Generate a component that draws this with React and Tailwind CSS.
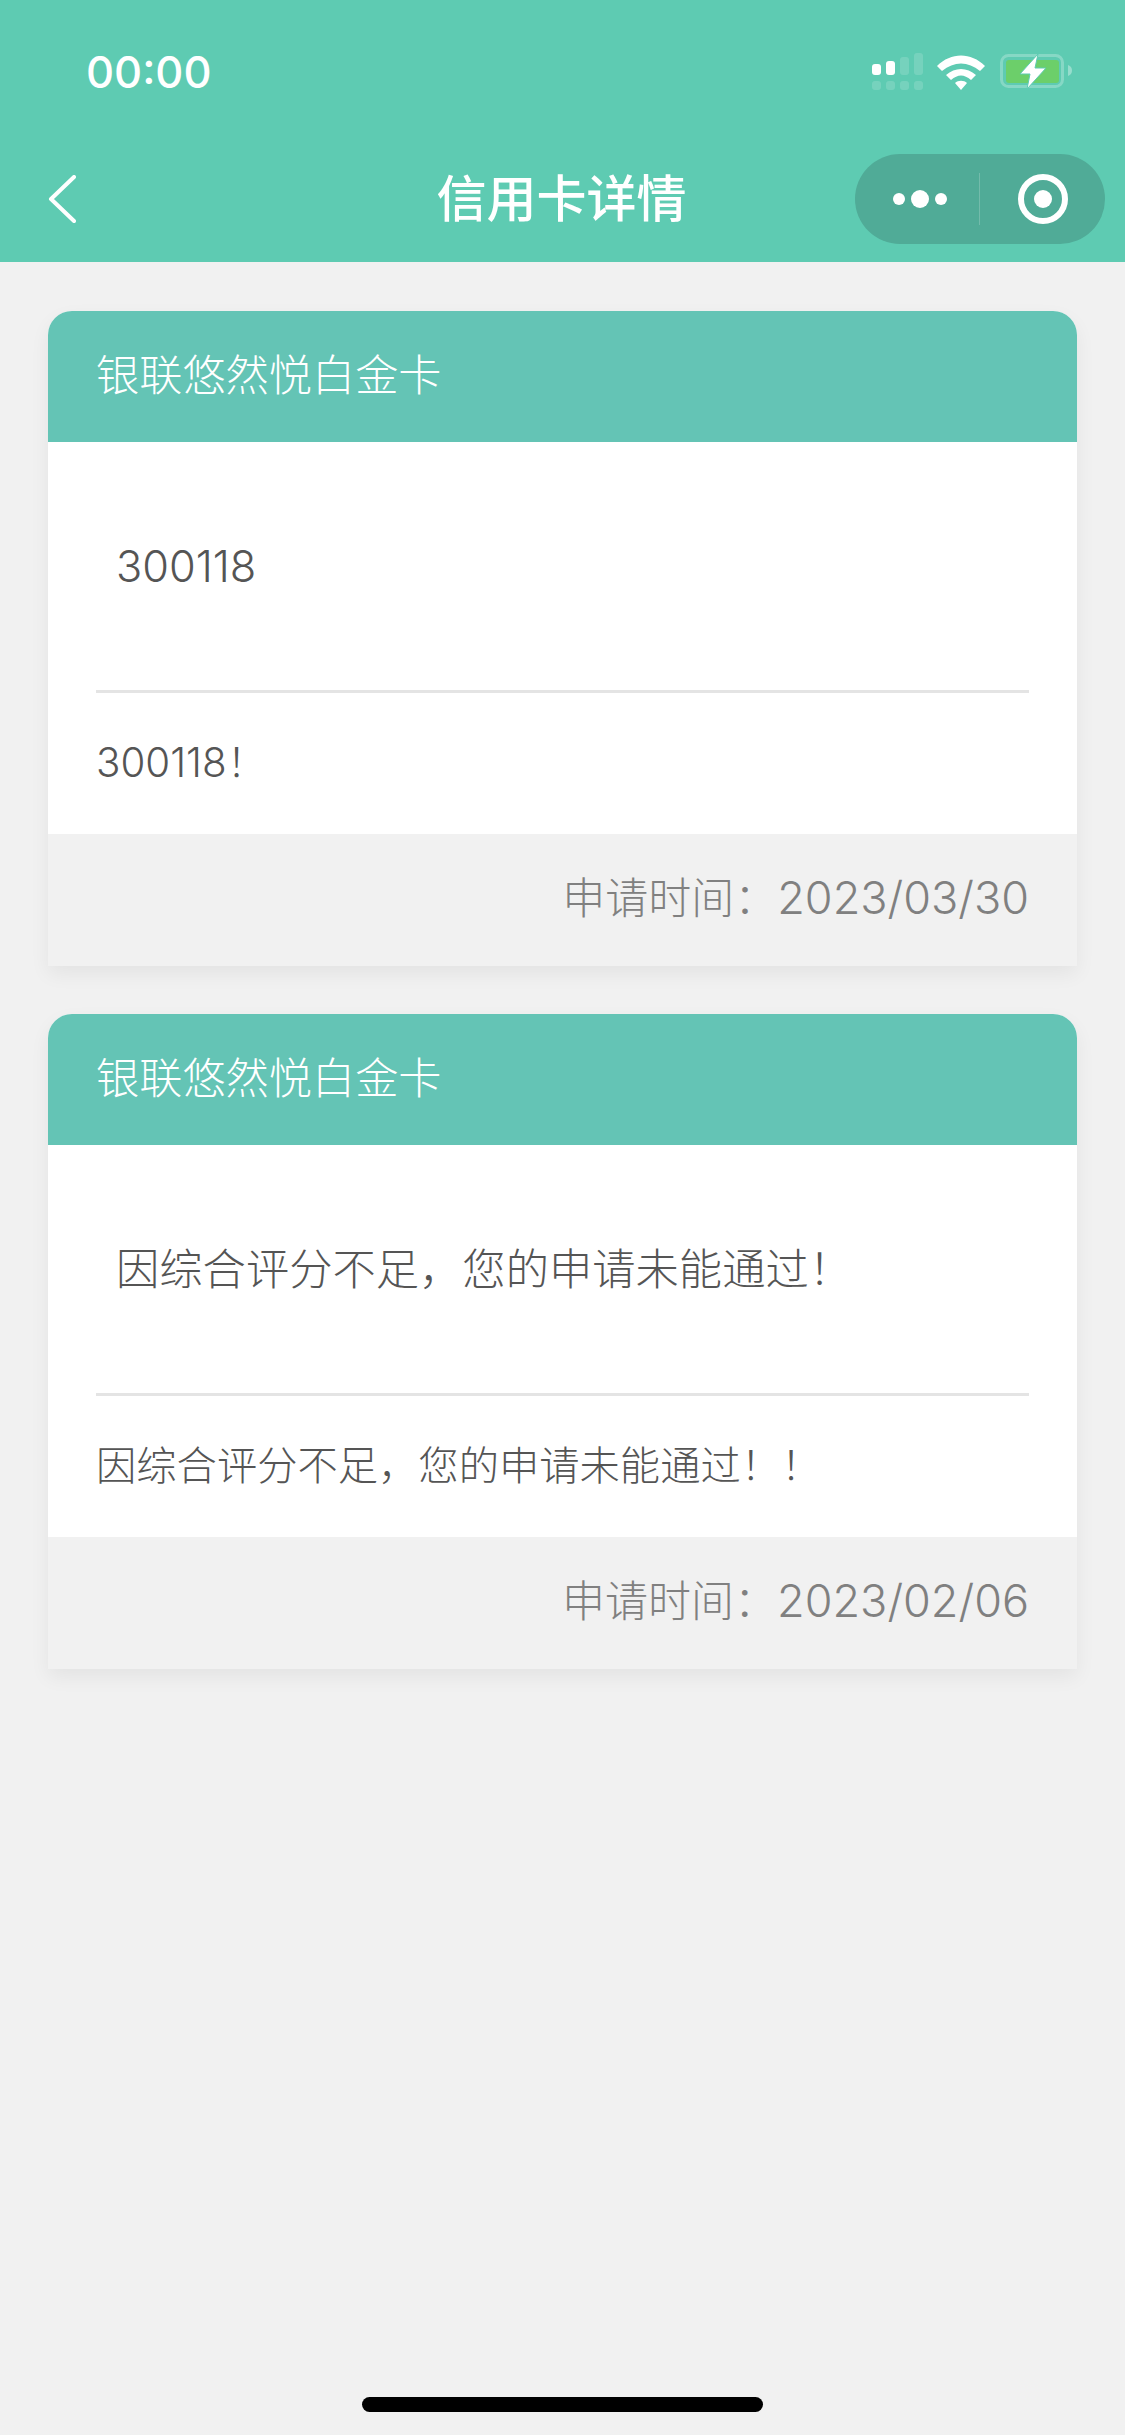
const cards = [
  { id: 1, name: '银联悠然悦白金卡', result: '300118', note: '300118！', date: '2023/03/30' },
  { id: 2, name: '银联悠然悦白金卡', result: '因综合评分不足，您的申请未能通过！', note: '因综合评分不足，您的申请未能通过！！', date: '2023/02/06' },
];

const font = "font-['Inter','Noto_Sans_CJK_SC',sans-serif]";

function StatusIcons() {
  return (
    <div className="flex items-center">
      {/* signal */}
      <svg width="51" height="38" viewBox="0 0 51 38" className="mr-[14px]">
        <rect x="0" y="11" width="9" height="11" rx="3" fill="#fff" />
        <rect x="14" y="8" width="9" height="14" rx="3" fill="#fff" />
        <rect x="28" y="4" width="9" height="18" rx="3" fill="#fff" opacity="0.15" />
        <rect x="42" y="0" width="9" height="22" rx="3" fill="#fff" opacity="0.15" />
        <rect x="0" y="28" width="9" height="9" rx="3" fill="#fff" opacity="0.15" />
        <rect x="14" y="28" width="9" height="9" rx="3" fill="#fff" opacity="0.15" />
        <rect x="28" y="28" width="9" height="9" rx="3" fill="#fff" opacity="0.15" />
        <rect x="42" y="28" width="9" height="9" rx="3" fill="#fff" opacity="0.15" />
      </svg>
      {/* wifi */}
      <svg width="48" height="35" viewBox="0 0 48 35" className="mr-[15px]">
        <path d="M0 11 C14 -3 34 -3 48 11 L43 16 C31 6 17 6 5 16 Z" fill="#fff" />
        <path d="M9 20 C18 12 30 12 39 20 L34 25 C27 19 21 19 14 25 Z" fill="#fff" />
        <path d="M18 28 C21 25 27 25 30 28 L24 35 Z" fill="#fff" />
      </svg>
      {/* battery */}
      <svg width="72" height="36" viewBox="0 0 72 36">
        <rect x="1.5" y="1.5" width="61" height="31" rx="7" fill="none" stroke="#fff" strokeOpacity="0.25" strokeWidth="3" />
        <rect x="6" y="6" width="53" height="23" rx="3" fill="#6ccf6a" />
        <path d="M68 11 C71 12 72 14 72 16.5 C72 19 71 21 68 22 Z" fill="#fff" opacity="0.35" />
        <path d="M38 0 L20 20 L30 20 L27 35 L46 14 L35 14 Z" fill="#fff" stroke="#5ecbb2" strokeWidth="1" />
      </svg>
    </div>
  );
}

function Capsule() {
  return (
    <div className="flex h-[90px] w-[250px] items-center rounded-full bg-[#50ab97]">
      <div className="flex h-[52px] w-[125px] items-center justify-center gap-[6px] border-r border-white/20 pl-[6px]">
        <span className="h-[12px] w-[12px] rounded-full bg-white" />
        <span className="h-[18px] w-[18px] rounded-full bg-white" />
        <span className="h-[12px] w-[12px] rounded-full bg-white" />
      </div>
      <div className="flex flex-1 items-center justify-center">
        <div className="flex h-[50px] w-[50px] items-center justify-center rounded-full border-[6px] border-white">
          <span className="h-[18px] w-[18px] rounded-full bg-white" />
        </div>
      </div>
    </div>
  );
}

function Card({ card }) {
  return (
    <div className="overflow-hidden rounded-t-[24px] bg-white shadow-[0_8px_20px_rgba(0,0,0,0.06)]">
      <div className="flex h-[131px] items-center bg-[#64c4b5] px-[48px] pb-[2px] text-[43.2px] font-light text-white">
        {card.name}
      </div>
      <div className="px-[48px]">
        <div className="flex h-[251px] items-center border-b-[3px] border-[#e4e4e4] px-[20px] text-[43.3px] font-light text-[#555]">
          {card.result}
        </div>
        <div className="flex h-[141px] items-center text-[40.3px] font-light text-[#555]">
          {card.note}
        </div>
      </div>
      <div className="flex h-[132px] items-center justify-end bg-[#f1f1f1] px-[48px] pb-[4px] text-[43px] font-light text-[#808080]">
        申请时间：<span className="text-[45px]">{card.date}</span>
      </div>
    </div>
  );
}

export default function App() {
  return (
    <div className={`flex h-[2435px] flex-col overflow-hidden bg-[#f1f1f1] ${font}`}>
      <header className="bg-[#5ecbb2] text-white">
        <div className="flex h-[136px] items-center justify-between pl-[86px] pr-[53px] pt-[8px]">
          <span className="pt-[2px] text-[43.5px] font-medium">00:00</span>
          <StatusIcons />
        </div>
        <div className="grid h-[126px] grid-cols-[1fr_auto_1fr] items-center">
          <svg width="28" height="48" viewBox="0 0 28 48" fill="none" className="ml-[48px]">
            <path d="M26 2 L3 24 L26 46" stroke="#fff" strokeWidth="4" strokeLinejoin="round" strokeLinecap="round" />
          </svg>
          <h1 className="-translate-x-[1px] text-[50px] font-medium">信用卡详情</h1>
          <div className="flex justify-end pr-[20px]">
            <Capsule />
          </div>
        </div>
      </header>
      <main className="flex flex-1 flex-col gap-[48px] px-[48px] pt-[49px]">
        {cards.map((card) => (
          <Card key={card.id} card={card} />
        ))}
      </main>
      <div className="flex justify-center pb-[23px]">
        <span className="h-[15px] w-[401px] rounded-[8px] bg-black" />
      </div>
    </div>
  );
}
